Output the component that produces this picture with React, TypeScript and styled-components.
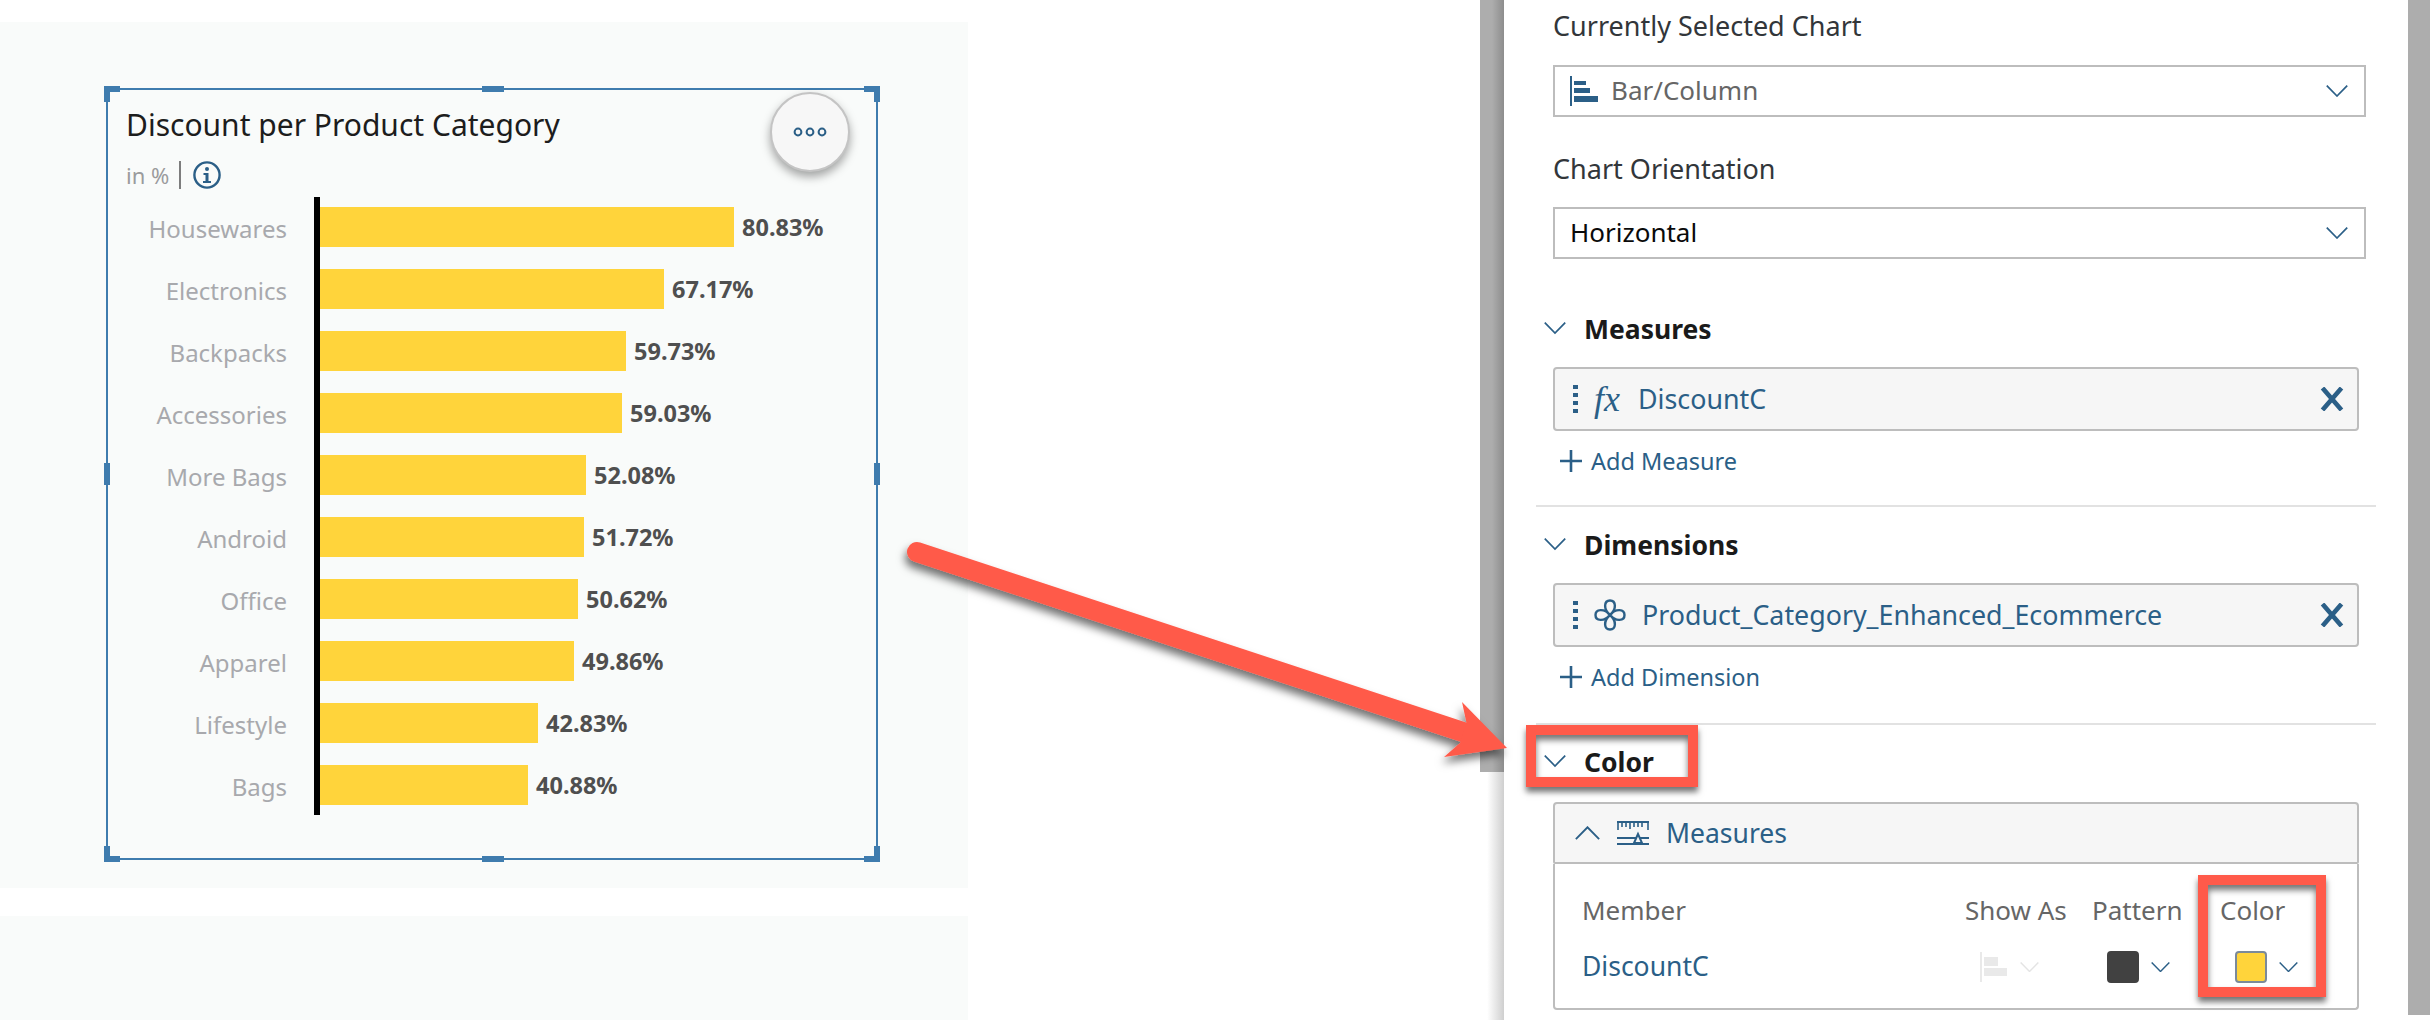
import React from "react";
import styled, { createGlobalStyle } from "styled-components";

const GlobalStyle = createGlobalStyle`
  html, body {
    margin: 0;
    background: #fff;
    font-family: "Noto Sans", "Open Sans", sans-serif;
  }
`;

const LINK = "#2b5f87";
const HANDLE = "#3f7cae";

const Page = styled.div`
  position: relative;
  display: flex;
  width: 2430px;
  height: 1020px;
  overflow: hidden;
  background: #fff;
`;

const LeftColumn = styled.div`
  width: 968px;
  padding-top: 22px;
  display: flex;
  flex-direction: column;
  gap: 28px;
  flex-shrink: 0;
`;

const ChartPanel = styled.div<{ $h: number }>`
  box-sizing: border-box;
  height: ${(p) => p.$h}px;
  background: #f9fbfa;
  padding: 66px 0 0 106px;
  flex-shrink: 0;
`;

const EmptyPanel = styled(ChartPanel)`
  padding: 0;
`;

const Card = styled.div`
  position: relative;
  box-sizing: border-box;
  width: 772px;
  height: 772px;
  border: 2px solid ${HANDLE};
  padding: 15px 0 0 18px;
`;

const Corner = styled.span<{ $v: "top" | "bottom"; $h: "left" | "right" }>`
  position: absolute;
  width: 16px;
  height: 16px;
  ${(p) => p.$v}: -4px;
  ${(p) => p.$h}: -4px;
  &::before,
  &::after {
    content: "";
    position: absolute;
    background: ${HANDLE};
    ${(p) => p.$v}: 0;
    ${(p) => p.$h}: 0;
  }
  &::before {
    width: 16px;
    height: 6px;
  }
  &::after {
    width: 6px;
    height: 16px;
  }
`;

const EdgeHandle = styled.span<{ $side: "top" | "bottom" | "left" | "right" }>`
  position: absolute;
  background: ${HANDLE};
  ${(p) =>
    p.$side === "top" || p.$side === "bottom"
      ? `width: 22px; height: 6px; left: 374px; ${p.$side}: -4px;`
      : `width: 6px; height: 22px; top: calc(50% - 11px); ${p.$side}: -4px;`}
`;

const MoreButton = styled.button`
  position: absolute;
  top: 2px;
  right: 26px;
  width: 80px;
  height: 80px;
  border-radius: 50%;
  border: 2px solid #c4c4c4;
  background: #f7f7f7;
  box-shadow: 0 5px 10px rgba(0, 0, 0, 0.35);
  display: flex;
  align-items: center;
  justify-content: center;
  padding: 0;
`;

const ChartTitle = styled.div`
  font-size: 30px;
  line-height: 40px;
  color: #1d1d1d;
`;

const SubTitle = styled.div`
  display: flex;
  align-items: center;
  height: 28px;
  margin-top: 16px;
  font-size: 22px;
  color: #9b9b9d;
`;

const SubDivider = styled.span`
  width: 2px;
  height: 28px;
  background: #7d7d7d;
  margin: 0 12px 0 10px;
`;

const Chart = styled.div`
  display: flex;
  margin-top: 8px;
`;

const Labels = styled.div`
  width: 161px;
  margin-right: 27px;
  padding-top: 10px;
  display: flex;
  flex-direction: column;
  gap: 22px;
`;

const CategoryLabel = styled.div`
  height: 40px;
  line-height: 43px;
  text-align: right;
  font-size: 24px;
  color: #a8a9ad;
  white-space: nowrap;
`;

const Bars = styled.div`
  border-left: 6px solid #000;
  padding: 10px 0;
  display: flex;
  flex-direction: column;
  gap: 22px;
`;

const BarRow = styled.div`
  display: flex;
  align-items: center;
  height: 40px;
  gap: 8px;
`;

const Bar = styled.div`
  height: 40px;
  background: #ffd43b;
`;

const BarValue = styled.span`
  font-size: 23.5px;
  font-weight: 700;
  line-height: 40px;
  color: #4f4f4f;
`;

const LeftStrip = styled.div`
  width: 24px;
  margin-left: 512px;
  flex-shrink: 0;
  background: linear-gradient(to right, #fff 0%, #fff 30%, #cfcfcf 100%);
`;

const StripFill = styled.div`
  height: 772px;
  background: linear-gradient(to right, #adadad 0%, #adadad 50%, #8d8d8d 100%);
`;

const RightStrip = styled.div`
  width: 22px;
  height: 1015px;
  background: #adadad;
  flex-shrink: 0;
`;

const Designer = styled.div`
  width: 904px;
  box-sizing: border-box;
  padding: 9px 32px 0;
  flex-shrink: 0;
  background: #fff;
`;

const FieldLabel = styled.div<{ $first?: boolean }>`
  height: 34px;
  line-height: 34px;
  margin: ${(p) => (p.$first ? "0" : "35px")} 0 ${(p) => (p.$first ? "22px" : "21px")} 17px;
  font-size: 27px;
  color: #32363a;
`;

const SelectBox = styled.div`
  box-sizing: border-box;
  height: 52px;
  margin: 0 10px 0 17px;
  border: 2px solid #bdbdbd;
  padding: 0 16px 0 15px;
  display: flex;
  align-items: center;
  gap: 11px;
  font-size: 26px;
  background: #fff;
`;

const SelectText = styled.span<{ $muted?: boolean }>`
  flex: 1;
  margin-bottom: 2px;
  color: ${(p) => (p.$muted ? "#666" : "#0a0a0a")};
`;

const SectionHeader = styled.div<{ $mt: number }>`
  position: relative;
  box-sizing: border-box;
  display: flex;
  align-items: center;
  height: 36px;
  margin-top: ${(p) => p.$mt}px;
  padding: 0 0 1px 8px;
  gap: 18px;
  font-size: 26.5px;
  font-weight: 700;
  line-height: 34px;
  color: #1a1a1a;
`;

const Token = styled.div`
  box-sizing: border-box;
  height: 64px;
  margin: 20px 17px 0;
  border: 2px solid #bdbdbd;
  border-radius: 4px;
  background: #f6f6f6;
  display: flex;
  align-items: center;
  padding: 0 13px 0 18px;
  font-size: 26.8px;
  color: ${LINK};
`;

const TokenText = styled.span`
  flex: 1;
  margin-bottom: 2px;
`;

const TokenIcon = styled.span`
  display: flex;
  width: 32px;
  margin: 0 16px;
`;

const FxGlyph = styled.span`
  display: inline-block;
  width: 28px;
  margin: 0 16px;
  font-family: "Liberation Serif", serif;
  font-style: italic;
  font-size: 36px;
  line-height: 40px;
`;

const AddRow = styled.div`
  display: flex;
  align-items: center;
  gap: 9px;
  height: 30px;
  margin: 15px 0 0 24px;
  font-size: 23.5px;
  color: ${LINK};
`;

const Divider = styled.div<{ $mt: number }>`
  height: 2px;
  margin-top: ${(p) => p.$mt}px;
  background: #e2e2e2;
`;

const Highlight = styled.span`
  position: absolute;
  box-sizing: border-box;
  border: 10px solid #ff5a4a;
  box-shadow: 0 5px 6px rgba(0, 0, 0, 0.55), inset 0 5px 6px rgba(0, 0, 0, 0.55);
  pointer-events: none;
`;

const ColorHeaderMark = styled(Highlight)`
  left: -10px;
  top: -19px;
  width: 172px;
  height: 62px;
`;

const ColorColumnMark = styled(Highlight)`
  left: 643px;
  top: 11px;
  width: 128px;
  height: 122px;
`;

const AccordionHeader = styled.div`
  box-sizing: border-box;
  height: 62px;
  margin: 22px 17px 0;
  border: 2px solid #bdbdbd;
  border-radius: 4px 4px 2px 2px;
  background: #f6f6f6;
  display: flex;
  align-items: center;
  gap: 17px;
  padding-left: 20px;
  font-size: 26.5px;
  color: ${LINK};
`;

const AccordionBody = styled.div`
  position: relative;
  box-sizing: border-box;
  height: 146px;
  margin: 0 17px;
  border: 2px solid #bdbdbd;
  border-top: 0;
  border-radius: 0 0 4px 4px;
  padding: 31px 0 0 27px;
  display: grid;
  grid-template-columns: 383px 127px 128px 1fr;
  grid-template-rows: 30px 32px;
  row-gap: 26px;
`;

const ColumnHead = styled.div`
  font-size: 26px;
  line-height: 30px;
  color: #666;
`;

const MemberName = styled.div`
  font-size: 26.5px;
  line-height: 30px;
  color: ${LINK};
`;

const PickerCell = styled.div`
  display: flex;
  align-items: center;
  gap: 12px;
  padding-left: 15px;
`;

const Swatch = styled.span<{ $fill: string; $edge: string }>`
  box-sizing: border-box;
  width: 32px;
  height: 32px;
  border-radius: 4px;
  background: ${(p) => p.$fill};
  border: 2px solid ${(p) => p.$edge};
`;

const ArrowLayer = styled.svg`
  position: absolute;
  left: 0;
  top: 0;
  pointer-events: none;
`;

const Chevron = ({ up, color = LINK, size = 22 }: { up?: boolean; color?: string; size?: number }) => (
  <svg width={size} height={size * 0.55} viewBox="0 0 20 11" fill="none" preserveAspectRatio="none">
    <path d={up ? "M0.7 10.5 10 1 19.3 10.5" : "M0.7 0.5 10 10 19.3 0.5"} stroke={color} strokeWidth="1.5" />
  </svg>
);

const Plus = () => (
  <svg width="22" height="22" viewBox="0 0 22 22">
    <path d="M11 0v22M0 11h22" stroke={LINK} strokeWidth="2.6" />
  </svg>
);

const CloseX = () => (
  <svg width="24" height="24" viewBox="0 0 24 24">
    <path d="M2.5 1 21.5 23M21.5 1 2.5 23" stroke={LINK} strokeWidth="4.6" />
  </svg>
);

const DragDots = () => (
  <svg width="5" height="28" viewBox="0 0 5 28">
    <path d="M0 0h5v4H0zM0 8h5v4H0zM0 16h5v4H0zM0 24h5v4H0z" fill={LINK} />
  </svg>
);

const BarChartIcon = () => (
  <svg width="30" height="30" viewBox="0 0 30 30" fill={LINK}>
    <path d="M0 0h2v30H0zM4 5h12v4H4zM4 12h16v5H4zM4 20h24v6H4z" />
  </svg>
);

const FadedBarIcon = () => (
  <svg width="28" height="30" viewBox="0 0 28 30">
    <path d="M0 0h2v30H0zM4 5h14v9H4zM4 16h23v8H4z" fill="#e9e9e9" />
  </svg>
);

const CloverIcon = () => (
  <svg width="32" height="32" viewBox="0 0 32 32" fill="none" stroke={LINK} strokeWidth="2.4">
    <path d="M16 16C9 10 10 1.5 16 1.5S23 10 16 16ZM16 16C9 22 10 30.5 16 30.5S23 22 16 16ZM16 16C10 9 1.5 10 1.5 16S10 23 16 16ZM16 16C22 9 30.5 10 30.5 16S22 23 16 16Z" />
  </svg>
);

const RulerIcon = () => (
  <svg width="32" height="24" viewBox="0 0 32 24" fill="none" stroke={LINK}>
    <path d="M0 1h32" strokeWidth="2" />
    <path d="M1 1v8M5 1v5M9 1v5M13 1v7M17 1v5M21 1v5M25 1v5M31 1v8" strokeWidth="1.6" />
    <path d="M0 17h32M0 23h32" strokeWidth="2.2" />
    <path d="M21 13l-4 9h8Z" strokeWidth="2" fill="#f6f6f6" />
  </svg>
);

const InfoIcon = () => (
  <svg width="28" height="28" viewBox="0 0 28 28" fill="none">
    <circle cx="14" cy="14" r="12.6" stroke={LINK} strokeWidth="2.4" />
    <circle cx="14" cy="8" r="2" fill={LINK} />
    <path d="M10.5 12h5v8h2.5v2H10v-2h2.5v-6h-2Z" fill={LINK} />
  </svg>
);

const DotsIcon = () => (
  <svg width="34" height="12" viewBox="0 0 34 12" fill="none" stroke={LINK} strokeWidth="2">
    <circle cx="5" cy="6" r="3.4" />
    <circle cx="17" cy="6" r="3.4" />
    <circle cx="29" cy="6" r="3.4" />
  </svg>
);

const rows = [
  { name: "Housewares", value: "80.83%", width: 414 },
  { name: "Electronics", value: "67.17%", width: 344 },
  { name: "Backpacks", value: "59.73%", width: 306 },
  { name: "Accessories", value: "59.03%", width: 302 },
  { name: "More Bags", value: "52.08%", width: 266 },
  { name: "Android", value: "51.72%", width: 264 },
  { name: "Office", value: "50.62%", width: 258 },
  { name: "Apparel", value: "49.86%", width: 254 },
  { name: "Lifestyle", value: "42.83%", width: 218 },
  { name: "Bags", value: "40.88%", width: 208 },
];

function App() {
  return (
    <Page>
      <GlobalStyle />
      <LeftColumn>
        <ChartPanel $h={866}>
          <Card>
            <Corner $v="top" $h="left" />
            <Corner $v="top" $h="right" />
            <Corner $v="bottom" $h="left" />
            <Corner $v="bottom" $h="right" />
            <EdgeHandle $side="top" />
            <EdgeHandle $side="bottom" />
            <EdgeHandle $side="left" />
            <EdgeHandle $side="right" />
            <MoreButton>
              <DotsIcon />
            </MoreButton>
            <ChartTitle>Discount per Product Category</ChartTitle>
            <SubTitle>
              in %
              <SubDivider />
              <InfoIcon />
            </SubTitle>
            <Chart>
              <Labels>
                {rows.map((r) => (
                  <CategoryLabel key={r.name}>{r.name}</CategoryLabel>
                ))}
              </Labels>
              <Bars>
                {rows.map((r) => (
                  <BarRow key={r.name}>
                    <Bar style={{ width: r.width }} />
                    <BarValue>{r.value}</BarValue>
                  </BarRow>
                ))}
              </Bars>
            </Chart>
          </Card>
        </ChartPanel>
        <EmptyPanel $h={200} />
      </LeftColumn>

      <LeftStrip>
        <StripFill />
      </LeftStrip>

      <Designer>
        <FieldLabel $first>Currently Selected Chart</FieldLabel>
        <SelectBox>
          <BarChartIcon />
          <SelectText $muted>Bar/Column</SelectText>
          <Chevron />
        </SelectBox>
        <FieldLabel>Chart Orientation</FieldLabel>
        <SelectBox>
          <SelectText>Horizontal</SelectText>
          <Chevron />
        </SelectBox>

        <SectionHeader $mt={52}>
          <Chevron />
          Measures
        </SectionHeader>
        <Token>
          <DragDots />
          <FxGlyph>fx</FxGlyph>
          <TokenText>DiscountC</TokenText>
          <CloseX />
        </Token>
        <AddRow>
          <Plus />
          Add Measure
        </AddRow>
        <Divider $mt={29} />

        <SectionHeader $mt={20}>
          <Chevron />
          Dimensions
        </SectionHeader>
        <Token>
          <DragDots />
          <TokenIcon>
            <CloverIcon />
          </TokenIcon>
          <TokenText>Product_Category_Enhanced_Ecommerce</TokenText>
          <CloseX />
        </Token>
        <AddRow>
          <Plus />
          Add Dimension
        </AddRow>
        <Divider $mt={31} />

        <SectionHeader $mt={19}>
          <ColorHeaderMark />
          <Chevron />
          Color
        </SectionHeader>
        <AccordionHeader>
          <Chevron up size={25} />
          <RulerIcon />
          Measures
        </AccordionHeader>
        <AccordionBody>
          <ColorColumnMark />
          <ColumnHead>Member</ColumnHead>
          <ColumnHead>Show As</ColumnHead>
          <ColumnHead>Pattern</ColumnHead>
          <ColumnHead>Color</ColumnHead>
          <MemberName>DiscountC</MemberName>
          <PickerCell>
            <FadedBarIcon />
            <Chevron color="#e4e4e4" size={19} />
          </PickerCell>
          <PickerCell>
            <Swatch $fill="#414141" $edge="#414141" />
            <Chevron size={19} />
          </PickerCell>
          <PickerCell>
            <Swatch $fill="#ffd43b" $edge="#7b8a9a" />
            <Chevron size={19} />
          </PickerCell>
        </AccordionBody>
      </Designer>

      <RightStrip />

      <ArrowLayer width="2430" height="1020" viewBox="0 0 2430 1020">
        <defs>
          <filter id="arrowShadow" x="-10%" y="-20%" width="120%" height="140%">
            <feDropShadow dx="-2" dy="6" stdDeviation="4" floodColor="#000" floodOpacity="0.55" />
          </filter>
        </defs>
        <g filter="url(#arrowShadow)" fill="#ff5a4a">
          <path d="M917 552 1466 733" stroke="#ff5a4a" strokeWidth="20" strokeLinecap="round" />
          <path d="M1462 702 1507 748 1444 757 1460 743 1466.5 723Z" />
        </g>
      </ArrowLayer>
    </Page>
  );
}

export default App;
